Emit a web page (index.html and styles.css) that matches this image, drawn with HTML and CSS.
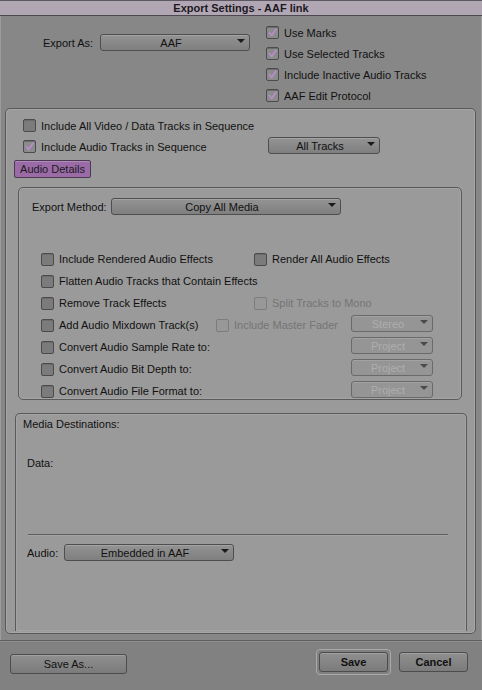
FILE: index.html
```html
<!DOCTYPE html>
<html lang="en">
<head>
  <meta charset="UTF-8">
  <title>Export Settings - AAF link</title>
  <link rel="stylesheet" href="styles.css">
</head>
<body>

<div class="window">
  <div class="titlebar">Export Settings - AAF link</div>

  <div class="top">
    <div class="export-as">
      <span class="label">Export As:</span>
      <div class="select format"><span class="value">AAF</span><span class="arrow"></span></div>
    </div>
    <div class="top-options">
      <div class="check"><span class="cb on"><svg viewBox="0 0 13 13"><path d="M2.8 6.6 L5.4 10 L10.6 2.6"/></svg></span>Use Marks</div>
      <div class="check"><span class="cb on"><svg viewBox="0 0 13 13"><path d="M2.8 6.6 L5.4 10 L10.6 2.6"/></svg></span>Use Selected Tracks</div>
      <div class="check"><span class="cb on"><svg viewBox="0 0 13 13"><path d="M2.8 6.6 L5.4 10 L10.6 2.6"/></svg></span>Include Inactive Audio Tracks</div>
      <div class="check"><span class="cb on"><svg viewBox="0 0 13 13"><path d="M2.8 6.6 L5.4 10 L10.6 2.6"/></svg></span>AAF Edit Protocol</div>
    </div>
  </div>

  <div class="panel">
    <div class="track-row">
      <div class="check"><span class="cb"></span>Include All Video / Data Tracks in Sequence</div>
    </div>
    <div class="track-row">
      <div class="check wide"><span class="cb on"><svg viewBox="0 0 13 13"><path d="M2.8 6.6 L5.4 10 L10.6 2.6"/></svg></span>Include Audio Tracks in Sequence</div>
      <div class="select tracks"><span class="value">All Tracks</span><span class="arrow"></span></div>
    </div>
    <button class="tab">Audio Details</button>

    <div class="group audio">
      <div class="method-row">
        <span class="label method-label">Export Method:</span>
        <div class="select method"><span class="value">Copy All Media</span><span class="arrow"></span></div>
      </div>
      <div class="audio-grid">
        <div class="check c12"><span class="cb"></span>Include Rendered Audio Effects</div>
        <div class="check c34"><span class="cb"></span>Render All Audio Effects</div>

        <div class="check c14"><span class="cb"></span>Flatten Audio Tracks that Contain Effects</div>

        <div class="check c12"><span class="cb"></span>Remove Track Effects</div>
        <div class="check c34 off"><span class="cb"></span>Split Tracks to Mono</div>

        <div class="check c1"><span class="cb"></span>Add Audio Mixdown Track(s)</div>
        <div class="check c23 off"><span class="cb"></span>Include Master Fader</div>
        <div class="select small off"><span class="value">Stereo</span><span class="arrow"></span></div>

        <div class="check c13"><span class="cb"></span>Convert Audio Sample Rate to:</div>
        <div class="select small off"><span class="value">Project</span><span class="arrow"></span></div>

        <div class="check c13"><span class="cb"></span>Convert Audio Bit Depth to:</div>
        <div class="select small off"><span class="value">Project</span><span class="arrow"></span></div>

        <div class="check c13"><span class="cb"></span>Convert Audio File Format to:</div>
        <div class="select small off"><span class="value">Project</span><span class="arrow"></span></div>
      </div>
    </div>

    <div class="group media">
      <div class="media-title">Media Destinations:</div>
      <div class="data-label">Data:</div>
      <div class="rule"></div>
      <div class="audio-row">
        <span class="label">Audio:</span>
        <div class="select embed"><span class="value">Embedded in AAF</span><span class="arrow"></span></div>
      </div>
    </div>
  </div>

  <div class="footer">
    <button class="btn save-as">Save As...</button>
    <div class="focus-ring"><button class="btn bold">Save</button></div>
    <button class="btn bold cancel">Cancel</button>
  </div>
</div>

</body>
</html>
```

FILE: styles.css
```css
* { box-sizing: border-box; }
body { margin: 0; background: #878787; font-family: "Liberation Sans", Arial, sans-serif; font-size: 11px; color: #111; }
.window { width: 482px; height: 690px; display: flex; flex-direction: column; background: #878787; box-shadow: inset 1px 0 #9c9c9c, inset -1px 0 #9c9c9c; }

.titlebar { height: 16px; line-height: 14px; text-align: center; font-weight: bold; color: #1c181e; background: #b1a7b4; border-top: 1px solid #5c5860; border-bottom: 1px solid #4c4a4e; }

.top { display: flex; height: 91px; padding-top: 6px; }
.export-as { width: 266px; display: flex; align-items: center; align-self: flex-start; padding: 12px 0 0 43px; }
.export-as .label { width: 57px; }
.top-options { display: flex; flex-direction: column; }

.check { display: flex; align-items: center; height: 21px; white-space: nowrap; }
.cb { width: 13px; height: 13px; flex: none; margin-right: 5px; border: 1px solid #4b4b4b; border-radius: 2px; background: #7b7b7b; box-shadow: inset 0 1px #6c6c6c; }
.cb.on { background: #8b8b8b; }
.cb svg { display: block; width: 11px; height: 11px; }
.cb path { fill: none; stroke: #bb8ccc; stroke-width: 2; stroke-linecap: round; stroke-linejoin: round; }
.check.off { color: #757575; }
.check.off .cb { border-color: #7c7c7c; background: #989898; box-shadow: none; }

.select { display: flex; align-items: center; height: 17px; padding: 0 4px; border: 1px solid #4e4e4e; border-radius: 3px; background: linear-gradient(#939393, #7f7f7f); box-shadow: inset 0 1px #a3a3a3; }
.select .value { flex: 1; text-align: center; }
.select .arrow { align-self: flex-start; margin-top: 4px; width: 0; height: 0; border-left: 4px solid transparent; border-right: 4px solid transparent; border-top: 4px solid #1a1a1a; }
.select.off { border-color: #6a6a6a; background: #959595; box-shadow: inset 0 1px #a2a2a2; color: #aeaeae; }
.select.off .arrow { border-top-color: #4a4a4a; }
.format { width: 150px; }

.panel { height: 526px; margin: 1px 6px 0 5px; display: flex; flex-direction: column; padding: 6px 0 2px; background: #9a9a9a; border: 1px solid #585858; border-radius: 5px; box-shadow: inset 0 0 0 1px #a6a6a6; }
.track-row { display: flex; align-items: center; padding-left: 17px; height: 21px; }
.check.wide { width: 245px; }
.tracks { width: 112px; margin-top: -2px; }

.tab { align-self: flex-start; width: 77px; height: 18px; margin: 3px 0 0 8px; padding: 0; font: inherit; color: #1a1a1a; background: #9b6ba7; border: 1px solid #4a3a50; border-radius: 2px; box-shadow: inset 0 1px #b08abb; }

.group { border: 1px solid #5a5a5a; border-radius: 5px; box-shadow: inset 0 0 0 1px #a4a4a4; }
.audio { height: 213px; margin: 9px 13px 0 12px; padding: 10px 0 0 13px; }
.method-row { display: flex; align-items: center; height: 17px; }
.method-label { width: 79px; }
.method { width: 230px; }

.audio-grid { display: grid; grid-template-columns: 175px 38px 97px 82px; grid-auto-rows: 22px; align-items: center; margin: 33px 0 0 9px; }
.audio-grid .check { height: 22px; }
.c1 { grid-column: 1; }
.c12 { grid-column: 1 / 3; }
.c13 { grid-column: 1 / 4; }
.c14 { grid-column: 1 / 5; }
.c23 { grid-column: 2 / 4; }
.c34 { grid-column: 3 / 5; }
.small { margin-top: -3px; }

.media { flex: 1; margin: 13px 8px 0 9px; padding: 3px 0 0 7px; border-bottom: none; border-radius: 5px 5px 0 0; }
.media-title { line-height: 14px; }
.data-label { line-height: 14px; margin: 25px 0 0 4px; }
.rule { height: 1px; margin: 64px 18px 0 5px; background: #5e5e5e; box-shadow: 0 1px #a4a4a4; }
.audio-row { display: flex; align-items: center; margin: 9px 0 0 4px; }
.audio-row .label { width: 37px; }
.embed { width: 170px; }

.footer { flex: 1; display: flex; align-items: flex-start; margin-top: 6px; border-top: 1px solid #5e5e5e; box-shadow: inset 0 1px #8e8e8e; background: #818181; }
.btn { height: 20px; padding: 0; font: inherit; color: #111; border: 1px solid #4c4c4c; border-radius: 3px; background: linear-gradient(#8f8f8f, #7b7b7b); box-shadow: inset 0 1px #a0a0a0; }
.btn.bold { font-weight: bold; width: 69px; }
.save-as { width: 117px; margin: 13px 0 0 10px; }
.focus-ring { margin: 8px 0 0 189px; padding: 2px; border: 1px solid #a9a9a9; border-radius: 4px; }
.cancel { margin: 11px 0 0 8px; }
```
